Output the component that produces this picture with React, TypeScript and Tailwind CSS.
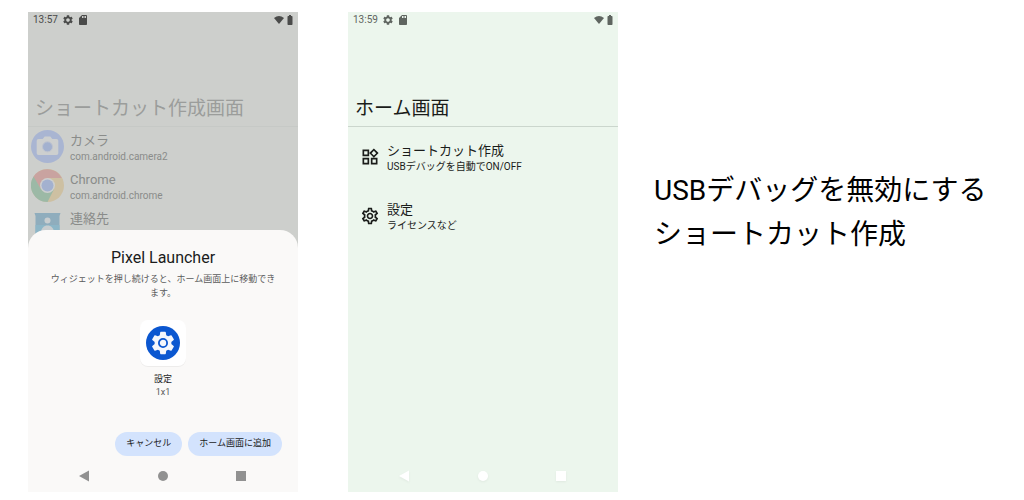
import type { ReactNode } from "react";
import { MdBatteryFull, MdOutlineSettings, MdOutlineWidgets, MdSdCard, MdSettings } from "react-icons/md";

const CameraIcon = () => (
  <svg viewBox="0 0 33 33" className="w-full">
    <circle cx="16.5" cy="16.5" r="16.5" fill="#a9b5d2" />
    <path d="M7.5 9h4.2l2-2.6h5.6l2 2.6h4.2a1.8 1.8 0 0 1 1.8 1.8v12.4a1.8 1.8 0 0 1-1.8 1.8h-18a1.8 1.8 0 0 1-1.8-1.8V10.8a1.8 1.8 0 0 1 1.8-1.8z" fill="#cdcfcf" />
    <circle cx="16.5" cy="16.8" r="5" fill="#a3b1cf" stroke="#bfc4cf" strokeWidth="1" />
  </svg>
);

const ChromeIcon = () => (
  <svg viewBox="0 0 33 33" className="w-full">
    <circle cx="16.5" cy="16.5" r="16.5" fill="#cdc0a2" />
    <path d="M2.2 8.25A16.5 16.5 0 0 1 30.8 9H16.5L10 20.25z" fill="#c9a3a0" />
    <path d="M2.6 7.6A16.5 16.5 0 0 0 16.5 33L23 20.25H10z" fill="#9cb9a6" />
    <circle cx="16.5" cy="16.5" r="7.5" fill="#cdcfcf" />
    <circle cx="16.5" cy="16.5" r="6" fill="#a3b1cf" />
  </svg>
);

const ContactsIcon = () => (
  <svg viewBox="0 0 33 33" className="w-full">
    <path d="M3.5 5h26l-1 3v24h-24V8z" fill="#8fadbd" />
    <path d="M4.5 17h24v15h-24z" fill="#8db6c7" />
    <circle cx="16.5" cy="12.5" r="3" fill="#c8cdcf" />
    <path d="M10 25c0-5 3-7.5 6.5-7.5S23 20 23 25z" fill="#c8cdcf" />
  </svg>
);

const apps = [
  { name: "カメラ", id: "com.android.camera2", icon: <CameraIcon /> },
  { name: "Chrome", id: "com.android.chrome", icon: <ChromeIcon /> },
  { name: "連絡先", id: "", icon: <ContactsIcon /> },
];

const menu = [
  { title: "ショートカット作成", detail: "USBデバッグを自動でON/OFF", Icon: MdOutlineWidgets },
  { title: "設定", detail: "ライセンスなど", Icon: MdOutlineSettings },
];

const StatusBar = ({ time, className }: { time: string; className: string }) => (
  <div className={`flex h-4 items-center pr-[2px] pl-[5px] ${className}`}>
    <span className="text-[10px] leading-4">{time}</span>
    <MdSettings className="ml-1 size-3" />
    <MdSdCard className="ml-[3px] size-3" />
    <svg viewBox="0 0 20 16" className="ml-auto w-[10px]" fill="currentColor">
      <path d="M0 4Q10-4 20 4L10 16z" />
    </svg>
    <MdBatteryFull className="size-3" />
  </div>
);

const NavBar = ({ className }: { className: string }) => (
  <nav className={`flex h-8 items-center justify-between pr-[51px] pl-[50px] ${className}`}>
    <button aria-label="戻る">
      <svg viewBox="0 0 12 12" className="size-3" fill="currentColor"><path d="M1 6l10-5.5v11z" /></svg>
    </button>
    <button aria-label="ホーム">
      <svg viewBox="0 0 12 12" className="size-3" fill="currentColor"><circle cx="6" cy="6" r="5" /></svg>
    </button>
    <button aria-label="最近のアプリ">
      <svg viewBox="0 0 12 12" className="size-3" fill="currentColor"><path d="M1 1h10v10H1z" /></svg>
    </button>
  </nav>
);

const Phone = ({ className, children }: { className: string; children: ReactNode }) => (
  <section className={`relative flex aspect-[9/16] flex-col overflow-hidden ${className}`}>{children}</section>
);

export default function App() {
  return (
    <main
      lang="ja"
      className="grid grid-cols-[59fr_37fr] gap-x-9 bg-white pt-3 pl-7 font-['Roboto','Noto_Sans_CJK_JP',sans-serif]"
    >
      <div className="grid grid-cols-2 gap-x-[50px]">
        <Phone className="bg-[#cdcfcc]">
          <StatusBar time="13:57" className="text-[#4a4b4a]" />
          <h2 className="mt-[66px] border-b border-[#c6c9c6] px-[7px] pb-[2px] text-[19px] leading-[30px] text-[#9b9d9b]">
            ショートカット作成画面
          </h2>
          <ul>
            {apps.map((app) => (
              <li key={app.name} className="flex h-[39px] items-center gap-[6px] px-[3px]">
                <div className="w-[33px]">{app.icon}</div>
                <div className="h-9 pt-1 text-[#8a8c8a]">
                  <p className="text-[13px] leading-4">{app.name}</p>
                  <p className="text-[10px] leading-4">{app.id}</p>
                </div>
              </li>
            ))}
          </ul>

          <div role="dialog" aria-label="Pixel Launcher" className="absolute inset-x-0 bottom-0 flex flex-col rounded-t-[18px] bg-[#faf9f8] pt-4 text-center">
            <h3 className="text-base leading-6 text-[#1b1c1c]">Pixel Launcher</h3>
            <p className="mt-[2px] px-5 text-[9px] leading-[14px] text-[#5b5c5c]">
              ウィジェットを押し続けると、ホーム画面上に移動できます。
            </p>
            <div className="mx-auto mt-5 flex size-[46px] items-center justify-center rounded-lg bg-white shadow-2xs">
              <div className="relative flex size-[34px] items-center justify-center rounded-full bg-[#0b57d0]">
                <MdSettings className="size-7 text-[#f4f7fc]" />
                <svg viewBox="0 0 12 12" className="absolute size-3">
                  <circle cx="6" cy="6" r="4.1" fill="#f4f7fc" stroke="#0b57d0" strokeWidth="1.8" />
                </svg>
              </div>
            </div>
            <p className="mt-[6px] text-[9px] leading-[14px] text-[#1b1c1c]">設定</p>
            <p className="text-[9px] leading-3 text-[#5b5c5c]">1x1</p>
            <div className="mt-[34px] flex justify-end gap-[6px] px-4 text-[9px] text-[#1b1c1c]">
              <button className="h-6 rounded-full bg-[#d3e3fd] px-[11px]">キャンセル</button>
              <button className="h-6 rounded-full bg-[#d3e3fd] px-[11px]">ホーム画面に追加</button>
            </div>
            <NavBar className="mt-1 text-[#919191]" />
          </div>
        </Phone>

        <Phone className="bg-[#ecf6ed]">
          <StatusBar time="13:59" className="text-[#5f6560]" />
          <h2 className="mt-[66px] border-b border-[#cbd6cd] px-[7px] pb-[2px] text-[19px] leading-[30px] text-[#1a1c1a]">
            ホーム画面
          </h2>
          <ul>
            {menu.map(({ title, detail, Icon }) => (
              <li key={title} className="flex h-[59px] items-center gap-[7px] px-3 text-[#1a1c1a]">
                <Icon className="size-5" />
                <div className="pt-1">
                  <p className="text-[13px] leading-4">{title}</p>
                  <p className="text-[10px] leading-4">{detail}</p>
                </div>
              </li>
            ))}
          </ul>
          <NavBar className="mt-auto text-white drop-shadow-xs" />
        </Phone>
      </div>

      <h1 className="pt-[157px] text-[28px] leading-[44px] text-black">
        USBデバッグを無効にする
        <br />
        ショートカット作成
      </h1>
    </main>
  );
}
